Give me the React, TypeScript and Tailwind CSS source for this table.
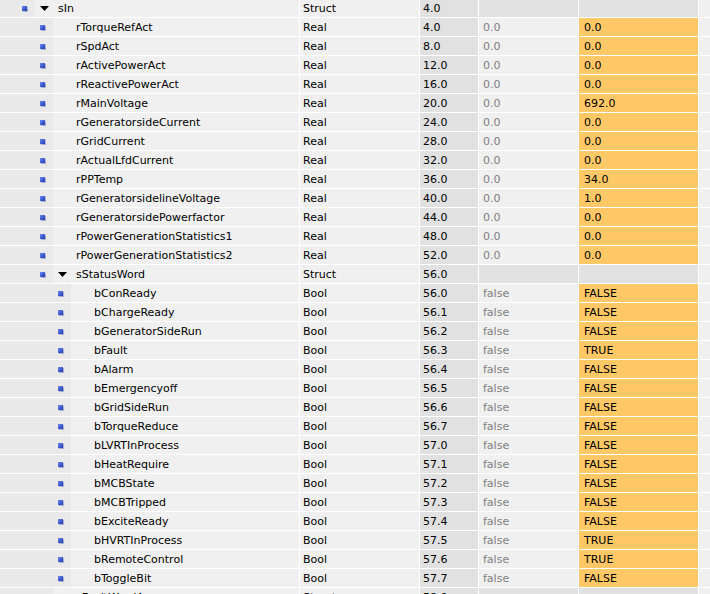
import React from "react";

type Row = {
  name: string;
  level: 1 | 2 | 3;
  type: string;
  offset: string;
  start?: string;
  monitor?: string;
  struct?: boolean;
};

const rows: Row[] = [
  { name: "sIn", level: 1, type: "Struct", offset: "4.0", struct: true },
  { name: "rTorqueRefAct", level: 2, type: "Real", offset: "4.0", start: "0.0", monitor: "0.0" },
  { name: "rSpdAct", level: 2, type: "Real", offset: "8.0", start: "0.0", monitor: "0.0" },
  { name: "rActivePowerAct", level: 2, type: "Real", offset: "12.0", start: "0.0", monitor: "0.0" },
  { name: "rReactivePowerAct", level: 2, type: "Real", offset: "16.0", start: "0.0", monitor: "0.0" },
  { name: "rMainVoltage", level: 2, type: "Real", offset: "20.0", start: "0.0", monitor: "692.0" },
  { name: "rGeneratorsideCurrent", level: 2, type: "Real", offset: "24.0", start: "0.0", monitor: "0.0" },
  { name: "rGridCurrent", level: 2, type: "Real", offset: "28.0", start: "0.0", monitor: "0.0" },
  { name: "rActualLfdCurrent", level: 2, type: "Real", offset: "32.0", start: "0.0", monitor: "0.0" },
  { name: "rPPTemp", level: 2, type: "Real", offset: "36.0", start: "0.0", monitor: "34.0" },
  { name: "rGeneratorsidelineVoltage", level: 2, type: "Real", offset: "40.0", start: "0.0", monitor: "1.0" },
  { name: "rGeneratorsidePowerfactor", level: 2, type: "Real", offset: "44.0", start: "0.0", monitor: "0.0" },
  { name: "rPowerGenerationStatistics1", level: 2, type: "Real", offset: "48.0", start: "0.0", monitor: "0.0" },
  { name: "rPowerGenerationStatistics2", level: 2, type: "Real", offset: "52.0", start: "0.0", monitor: "0.0" },
  { name: "sStatusWord", level: 2, type: "Struct", offset: "56.0", struct: true },
  { name: "bConReady", level: 3, type: "Bool", offset: "56.0", start: "false", monitor: "FALSE" },
  { name: "bChargeReady", level: 3, type: "Bool", offset: "56.1", start: "false", monitor: "FALSE" },
  { name: "bGeneratorSideRun", level: 3, type: "Bool", offset: "56.2", start: "false", monitor: "FALSE" },
  { name: "bFault", level: 3, type: "Bool", offset: "56.3", start: "false", monitor: "TRUE" },
  { name: "bAlarm", level: 3, type: "Bool", offset: "56.4", start: "false", monitor: "FALSE" },
  { name: "bEmergencyoff", level: 3, type: "Bool", offset: "56.5", start: "false", monitor: "FALSE" },
  { name: "bGridSideRun", level: 3, type: "Bool", offset: "56.6", start: "false", monitor: "FALSE" },
  { name: "bTorqueReduce", level: 3, type: "Bool", offset: "56.7", start: "false", monitor: "FALSE" },
  { name: "bLVRTInProcess", level: 3, type: "Bool", offset: "57.0", start: "false", monitor: "FALSE" },
  { name: "bHeatRequire", level: 3, type: "Bool", offset: "57.1", start: "false", monitor: "FALSE" },
  { name: "bMCBState", level: 3, type: "Bool", offset: "57.2", start: "false", monitor: "FALSE" },
  { name: "bMCBTripped", level: 3, type: "Bool", offset: "57.3", start: "false", monitor: "FALSE" },
  { name: "bExciteReady", level: 3, type: "Bool", offset: "57.4", start: "false", monitor: "FALSE" },
  { name: "bHVRTInProcess", level: 3, type: "Bool", offset: "57.5", start: "false", monitor: "TRUE" },
  { name: "bRemoteControl", level: 3, type: "Bool", offset: "57.6", start: "false", monitor: "TRUE" },
  { name: "bToggleBit", level: 3, type: "Bool", offset: "57.7", start: "false", monitor: "FALSE" },
  { name: "sFaultWordA", level: 2, type: "Struct", offset: "58.0", struct: true },
];

const indentClass: Record<number, string> = {
  1: "w-[35px]",
  2: "w-[53px]",
  3: "w-[71px]",
};

function Square() {
  return (
    <div className="w-[5px] h-[5px] bg-gradient-to-br from-[#6a88f2] to-[#2238b0] shadow-[1px_1px_0_#a9b1d0]" />
  );
}

function Triangle() {
  return (
    <svg width="9" height="5" viewBox="0 0 9 5" className="block">
      <polygon points="0,0 9,0 4.5,5" fill="#000" />
    </svg>
  );
}

function TableRow({ row }: { row: Row }) {
  return (
    <div className="flex h-[19px] border-b border-white text-[11px] leading-[17px]">
      <div className="flex w-[299px] shrink-0 bg-[#f0f0f0]">
        <div className={`${indentClass[row.level]} shrink-0 bg-[#e9e9e9] flex items-center justify-end pr-[8px]`}>
          <Square />
        </div>
        <div className="w-[23px] shrink-0 flex items-center pl-[5px]">
          {row.struct ? <Triangle /> : null}
        </div>
        <div className="pt-[1px] text-black whitespace-nowrap">{row.name}</div>
      </div>
      <div className="w-[1px] shrink-0 bg-white" />
      <div className="w-[119px] shrink-0 bg-[#f0f0f0] pl-[3px] pt-[1px] text-black">{row.type}</div>
      <div className="w-[1px] shrink-0 bg-white" />
      <div className="w-[58px] shrink-0 bg-[#e1e1e1] pl-[3px] pt-[1px] text-black">{row.offset}</div>
      <div className="w-[1px] shrink-0 bg-white" />
      <div className={`w-[99px] shrink-0 pl-[4px] pt-[1px] text-[#7f7f7f] ${row.struct ? "bg-[#e1e1e1]" : "bg-[#f0f0f0]"}`}>
        {row.start ?? ""}
      </div>
      <div className="w-[1px] shrink-0 bg-white" />
      <div className={`w-[119px] shrink-0 pl-[5px] pt-[1px] text-black ${row.struct ? "bg-[#e1e1e1]" : "bg-[#ffc866]"}`}>
        {row.monitor ?? ""}
      </div>
      <div className="w-[1px] shrink-0 bg-white" />
      <div className="flex-1 bg-[#f0f0f0]" />
    </div>
  );
}

export default function App() {
  return (
    <div
      className="w-[710px] h-[594px] overflow-hidden bg-[#f0f0f0]"
      style={{ fontFamily: '"DejaVu Sans", Verdana, sans-serif' }}
    >
      <div className="mt-[-1px]">
        {rows.map((r, i) => (
          <TableRow key={i} row={r} />
        ))}
      </div>
    </div>
  );
}
